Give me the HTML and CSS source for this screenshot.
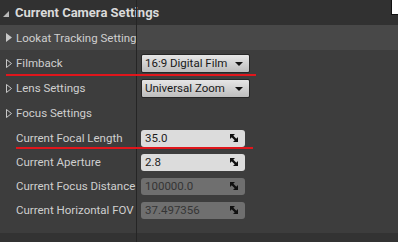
FILE: index.html
```html
<!DOCTYPE html>
<html lang="en">
<head>
  <meta charset="UTF-8" />
  <title>Current Camera Settings</title>
  <link rel="stylesheet" href="styles.css">
</head>
<body>

  <div class="panel">
    <div class="header">
      <svg class="hdr-tri" width="6" height="6" viewBox="0 0 6 6"><polygon points="6,0 6,6 0,6" fill="#b8b8b8"/></svg>
      Current Camera Settings
    </div>

    <div class="row category">
      <div class="name">
        <svg class="expander" width="6" height="9" viewBox="0 0 6 9"><polygon points="0,0 6,4.5 0,9" fill="#c8c8c8"/></svg>
        Lookat Tracking Settings
      </div>
    </div>

    <div class="row">
      <div class="name">
        <svg class="expander" width="6" height="9" viewBox="0 0 6 9"><polygon points="0.5,0.5 5.5,4.5 0.5,8.5" fill="none" stroke="#c8c8c8" stroke-width="1"/></svg>
        Filmback
      </div>
      <div class="value">
        <div class="combo">16:9 Digital Film<span class="caret"></span></div>
      </div>
    </div>

    <div class="row">
      <div class="name">
        <svg class="expander" width="6" height="9" viewBox="0 0 6 9"><polygon points="0.5,0.5 5.5,4.5 0.5,8.5" fill="none" stroke="#c8c8c8" stroke-width="1"/></svg>
        Lens Settings
      </div>
      <div class="value">
        <div class="combo">Universal Zoom<span class="caret"></span></div>
      </div>
    </div>

    <div class="row">
      <div class="name">
        <svg class="expander" width="6" height="9" viewBox="0 0 6 9"><polygon points="0.5,0.5 5.5,4.5 0.5,8.5" fill="none" stroke="#c8c8c8" stroke-width="1"/></svg>
        Focus Settings
      </div>
      <div class="value"></div>
    </div>

    <div class="row">
      <div class="name indent">Current Focal Length</div>
      <div class="value">
        <div class="num">35.0<svg class="spin" width="8" height="8" viewBox="0 0 8 8"><polygon points="0,0 5,0 0,5" /><polygon points="8,8 3,8 8,3" /><line x1="1" y1="1" x2="7" y2="7" stroke="#111" stroke-width="2.4"/></svg></div>
      </div>
    </div>

    <div class="row">
      <div class="name indent">Current Aperture</div>
      <div class="value">
        <div class="num">2.8<svg class="spin" width="8" height="8" viewBox="0 0 8 8"><polygon points="0,0 5,0 0,5" /><polygon points="8,8 3,8 8,3" /><line x1="1" y1="1" x2="7" y2="7" stroke="#111" stroke-width="2.4"/></svg></div>
      </div>
    </div>

    <div class="row">
      <div class="name indent">Current Focus Distance</div>
      <div class="value">
        <div class="num disabled">100000.0<svg class="spin" width="8" height="8" viewBox="0 0 8 8"><polygon points="0,0 5,0 0,5" /><polygon points="8,8 3,8 8,3" /><line x1="1" y1="1" x2="7" y2="7" stroke="#111" stroke-width="2.4"/></svg></div>
      </div>
    </div>

    <div class="row">
      <div class="name indent">Current Horizontal FOV</div>
      <div class="value">
        <div class="num disabled">37.497356<svg class="spin" width="8" height="8" viewBox="0 0 8 8"><polygon points="0,0 5,0 0,5" /><polygon points="8,8 3,8 8,3" /><line x1="1" y1="1" x2="7" y2="7" stroke="#111" stroke-width="2.4"/></svg></div>
      </div>
    </div>

    <div class="spacer"></div>
    <div class="footer"></div>

    <div class="splitter"></div>
    <span class="mark mark-filmback"></span>
    <span class="mark mark-focal"></span>
    <span class="corner"></span>
  </div>

</body>
</html>
```

FILE: styles.css
```css
body {
  margin: 0;
  font-family: Roboto, 'Noto Sans', sans-serif;
  background: #3c3c3c;
}

.panel {
  position: relative;
  width: 398px;
  height: 242px;
  background: #3d3d3d;
  display: flex;
  flex-direction: column;
  overflow: hidden;
}

.header {
  height: 25px;
  background: #313131;
  color: #dadada;
  font-weight: bold;
  font-size: 13px;
  display: flex;
  align-items: center;
  padding-left: 3px;
  flex-shrink: 0;
}

.hdr-tri {
  margin-right: 6px;
  margin-top: 2px;
}

.row {
  height: 24px;
  display: grid;
  grid-template-columns: 136px 1fr;
  align-items: center;
  flex-shrink: 0;
  color: #cfcfcf;
  font-size: 11.5px;
}

.row.category {
  height: 25px;
  background: #484848;
}

.row:nth-child(3) {
  height: 26px;
}

.row:nth-child(5) {
  height: 26px;
}

.name {
  display: flex;
  align-items: center;
  padding-left: 6px;
  white-space: nowrap;
  overflow: hidden;
}

.name.indent {
  padding-left: 16px;
}

.expander {
  margin-right: 4px;
  flex-shrink: 0;
}

.value {
  padding-left: 5px;
  display: flex;
  align-items: center;
}

.combo {
  width: 104px;
  height: 17px;
  border: 1px solid #262626;
  border-radius: 2px;
  background: linear-gradient(to bottom, #e6e6e6, #bdbdbd);
  color: #181818;
  font-size: 11.5px;
  display: flex;
  align-items: center;
  padding-left: 3px;
  box-sizing: content-box;
  position: relative;
}

.caret {
  position: absolute;
  right: 6px;
  top: 7px;
  width: 0;
  height: 0;
  border-left: 4px solid transparent;
  border-right: 4px solid transparent;
  border-top: 4px solid #111;
}

.num {
  width: 104px;
  height: 17px;
  border-radius: 3px;
  background: #dcdcdc;
  color: #1c1c1c;
  font-size: 11.5px;
  display: flex;
  align-items: center;
  padding-left: 4px;
  box-sizing: border-box;
  position: relative;
}

.num.disabled {
  background: #6f6f6f;
  color: #353535;
}

.spin {
  position: absolute;
  right: 7px;
  top: 4px;
  fill: #111;
}

.spacer {
  flex: 1;
}

.footer {
  height: 9px;
  background: #333333;
  flex-shrink: 0;
}

.splitter {
  position: absolute;
  left: 136px;
  top: 0;
  bottom: 0;
  width: 1px;
  background: #252525;
}

.mark {
  position: absolute;
  height: 2px;
  background: #e0161c;
}

.mark-filmback {
  left: 6px;
  top: 74px;
  width: 250px;
}

.mark-focal {
  left: 16px;
  top: 147px;
  width: 237px;
}

.corner {
  position: absolute;
  right: 0;
  top: 0;
  width: 6px;
  height: 14px;
  background: #ffffff;
  border-left: 1px solid #111;
  border-bottom: 1px solid #111;
}
```
